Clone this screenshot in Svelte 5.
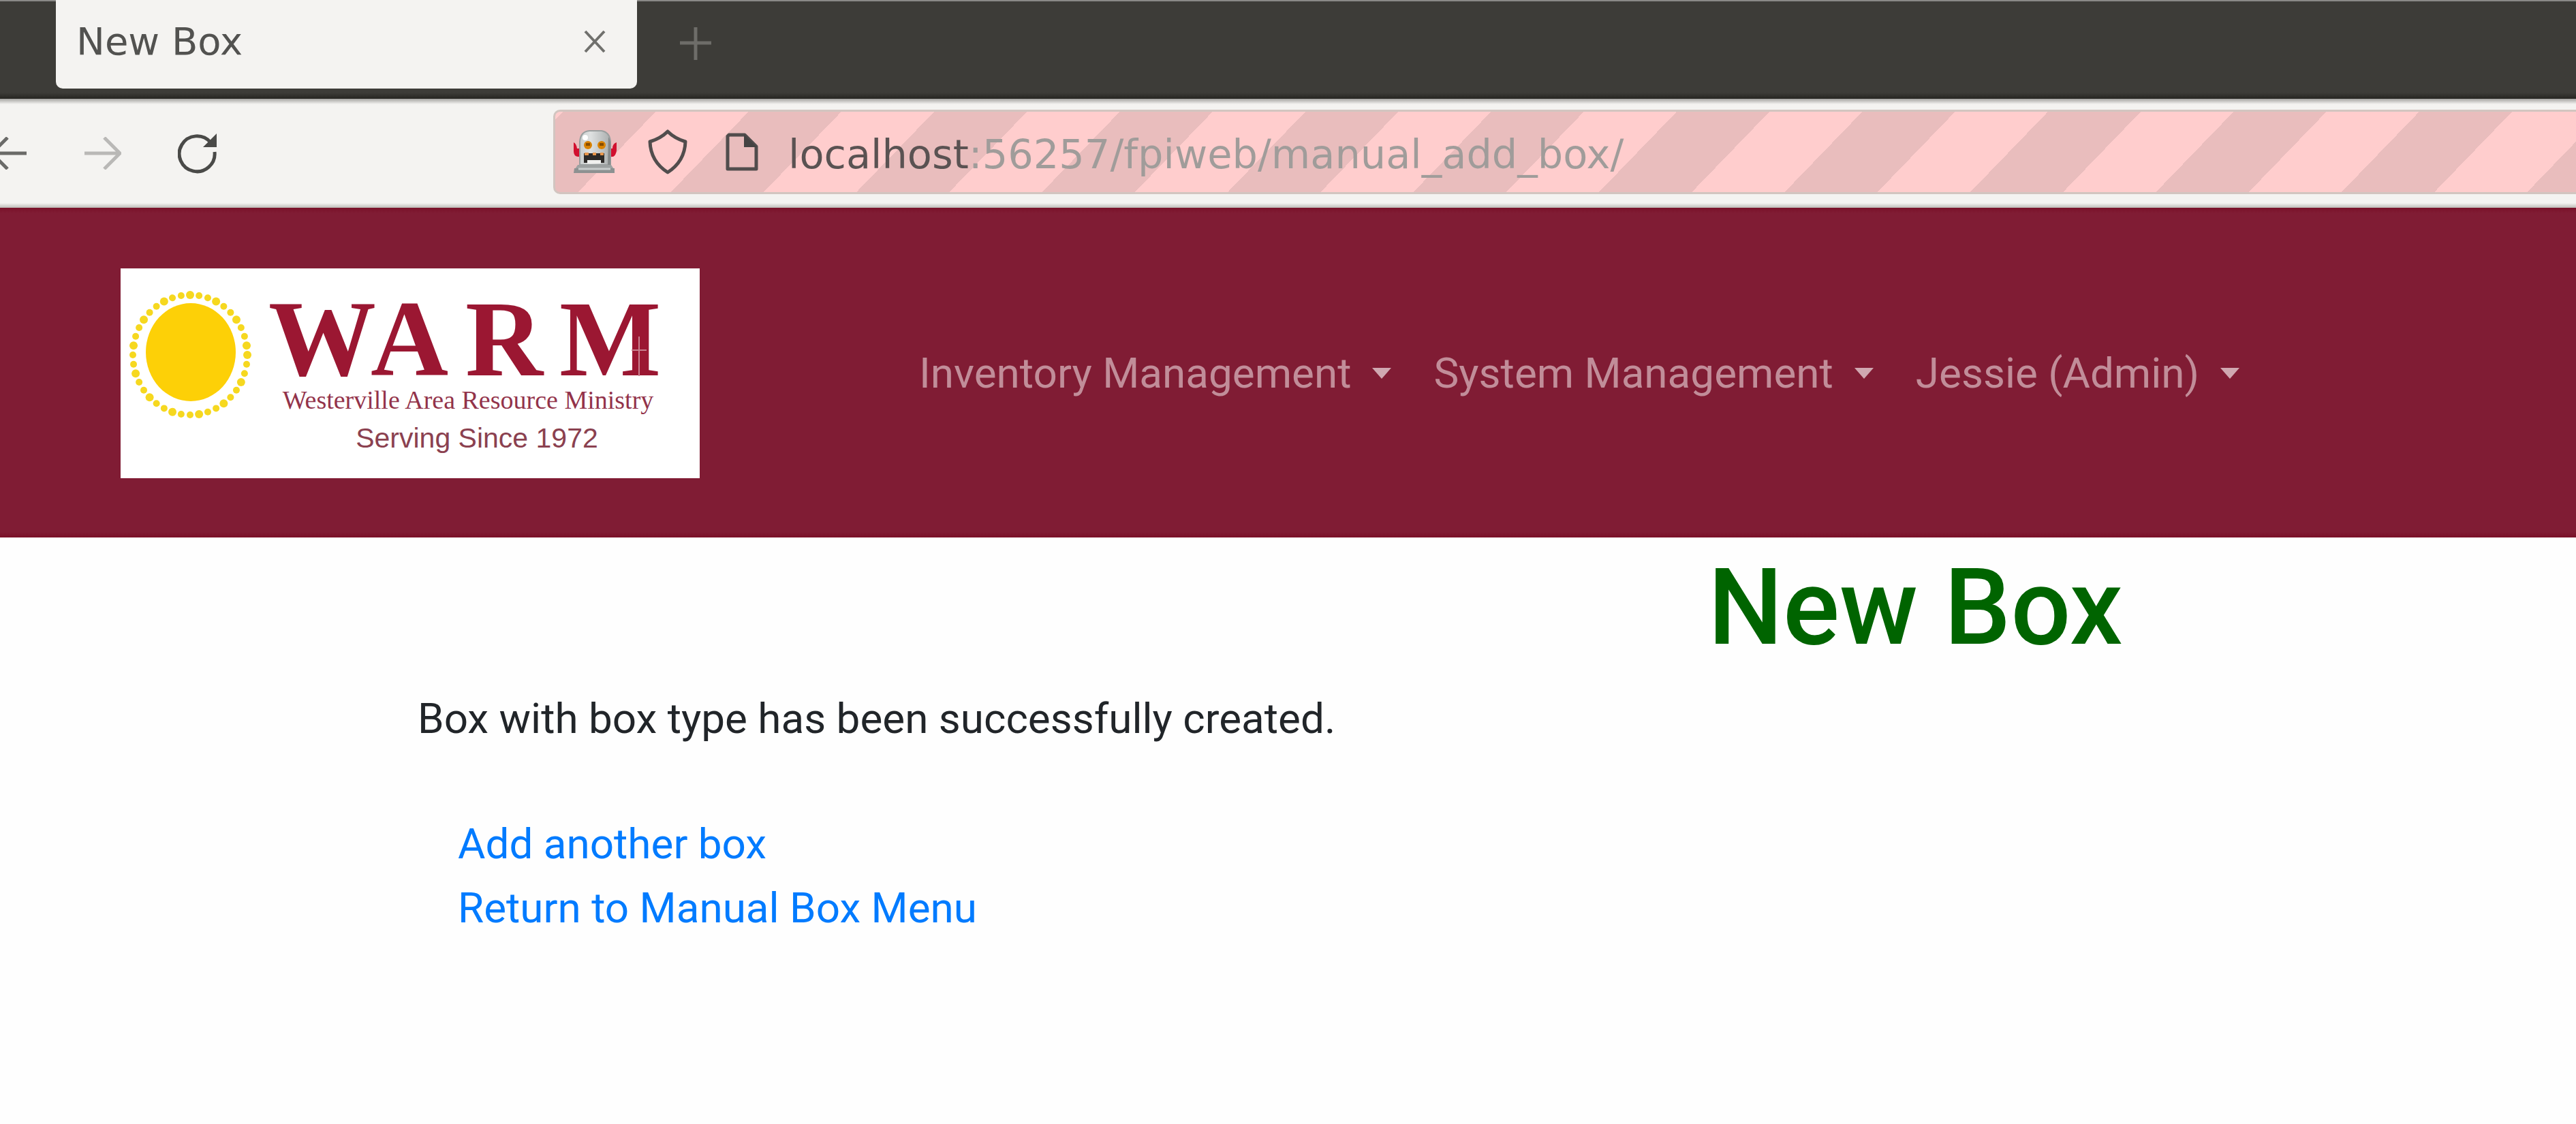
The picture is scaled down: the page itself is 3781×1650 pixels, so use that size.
<script>
  const menus = ['Inventory Management', 'System Management', 'Jessie (Admin)'];
  const links = ['Add another box', 'Return to Manual Box Menu'];

  // Dots of the ring around the logo's sun
  const rays = Array.from({ length: 40 }, (_, i) => {
    const angle = (i / 40) * Math.PI * 2;
    return {
      x: 102 + Math.cos(angle) * 84,
      y: 127 + Math.sin(angle) * 88,
      r: i % 3 === 0 ? 6 : 5
    };
  });

  let address = $state('localhost:56257/fpiweb/manual_add_box/');
</script>

<div class="browser">
  <div class="tabs">
    <div class="tab">
      <span class="tab-title">New Box</span>
      <button class="icon-button" aria-label="Close tab">
        <svg width="32" height="34" viewBox="0 0 32 34"><path d="M2 2 30 32M30 2 2 32" fill="none" stroke="#70706d" stroke-width="4" /></svg>
      </button>
    </div>
    <button class="icon-button new-tab" aria-label="Open a new tab">
      <svg width="46" height="48" viewBox="0 0 46 48"><path d="M23 0V48M0 23H46" fill="none" stroke="#6e6d69" stroke-width="5" /></svg>
    </button>
  </div>

  <div class="toolbar">
    <button class="icon-button" aria-label="Back">
      <svg width="40" height="48" viewBox="14 0 40 48"><path d="M53 24H3M25 1 2 24 25 47" fill="none" stroke="#6a6a68" stroke-width="5" /></svg>
    </button>
    <button class="icon-button forward" aria-label="Forward">
      <svg width="54" height="48" viewBox="0 0 54 48"><path d="M0 24H51M29 1 52 24 29 47" fill="none" stroke="#b9b8b6" stroke-width="5" /></svg>
    </button>
    <button class="icon-button reload" aria-label="Reload">
      <svg width="58" height="60" viewBox="0 0 58 60">
        <path d="M48 14A26 26 0 1 0 54 28" fill="none" stroke="#4a4a48" stroke-width="5" />
        <path d="M57 1V21H37Z" fill="#4a4a48" />
      </svg>
    </button>
    <div class="address">
      <svg class="robot" width="66" height="64" viewBox="0 0 66 64" aria-hidden="true">
        <defs>
          <linearGradient id="metal" x1="0" y1="0" x2="1" y2="0">
            <stop offset="0" stop-color="#c9cdcd" />
            <stop offset=".35" stop-color="#dfe1e1" />
            <stop offset="1" stop-color="#a9adad" />
          </linearGradient>
        </defs>
        <path d="M1 18Q5 20 6 27H11V39H7Q1 38 1 31Z" fill="#d1102f" />
        <path d="M64 18Q58 20 58 27H54V39H59Q63 37 64 30Z" fill="#d1102f" />
        <path d="M10 51V17Q11 2 24 1H42Q54 3 55 17V51Z" fill="url(#metal)" stroke="#9a9f9f" stroke-width="2" />
        <path d="M52 10Q55 15 55 22V51H51Z" fill="#858989" />
        <circle cx="18" cy="11" r="4" fill="#fff" />
        <ellipse cx="22" cy="22" rx="6" ry="6" fill="#d98200" />
        <ellipse cx="42" cy="22" rx="6" ry="6" fill="#d98200" />
        <path d="M19 21H25M39 21H45" stroke="#864c00" stroke-width="4" />
        <path d="M16 34H46V48H41V44H21V48H16Z" fill="#2d2a28" />
        <path d="M17 35H23M29 35H34M40 35H45" stroke="#e8964b" stroke-width="4" />
        <path d="M21 44H41V49H21Z" fill="#f0f0ee" />
        <path d="M7 51H56L60 57H3Z" fill="#9da1a1" />
        <path d="M2 56H61V63H1Z" fill="#8d9191" />
        <path d="M8 57H55" stroke="#c8cccc" stroke-width="3" />
      </svg>
      <svg class="shield" width="58" height="66" viewBox="0 0 58 66" aria-hidden="true"><path d="M29 3Q19 13 3 18Q4 47 29 63Q54 47 55 18Q39 13 29 3Z" fill="none" stroke="#514d4d" stroke-width="5" stroke-linejoin="round" /></svg>
      <svg class="page" width="48" height="56" viewBox="0 0 48 56" aria-hidden="true">
        <path d="M5 3H28L45 20V53H3V5Z" fill="none" stroke="#514d4d" stroke-width="5" stroke-linejoin="round" />
        <path d="M27 2 46 21H27Z" fill="#454343" />
      </svg>
      <input class="url" type="text" aria-label="Address" spellcheck="false" bind:value={address} />
    </div>
  </div>
</div>

<header class="site-header">
  <a class="brand" href="#home" aria-label="Westerville Area Resource Ministry">
    <svg width="850" height="308" viewBox="0 0 850 308">
      <rect width="850" height="308" fill="#fff" />
      {#each rays as ray}
        <circle cx={ray.x} cy={ray.y} r={ray.r} fill="#f6d81f" />
      {/each}
      <ellipse cx="103" cy="123" rx="66" ry="72" fill="#fdd007" />
      <text class="logo-name" x="217 367 506 644" y="157">WARM</text>
      <path d="M761 100V158M750 120H772" stroke="#c8808f" stroke-width="2" />
      <text class="logo-full" x="510" y="206" text-anchor="middle">Westerville Area Resource Ministry</text>
      <text class="logo-since" x="523" y="263" text-anchor="middle">Serving Since 1972</text>
    </svg>
  </a>
  <nav>
    {#each menus as menu}
      <button class="menu" aria-haspopup="true">{menu}<span class="caret"></span></button>
    {/each}
  </nav>
</header>

<main>
  <h1>New Box</h1>
  <p>Box with box type has been successfully created.</p>
  <ul>
    {#each links as link}
      <li><a href="#{link}">{link}</a></li>
    {/each}
  </ul>
</main>

<style>
  :global(body) {
    background: #fefefe;
    overflow-x: hidden;
  }

  svg {
    display: block;
    flex: none;
  }

  .icon-button {
    padding: 0;
    border: 0;
    background: none;
  }

  .browser {
    font-family: 'DejaVu Sans', sans-serif;
  }

  .tabs {
    display: flex;
    align-items: flex-start;
    height: 145px;
    padding-left: 82px;
    box-sizing: border-box;
    border-top: 2px solid #8a8987;
    background: linear-gradient(#3d3c38 0 134px, #262521);
  }

  .tab {
    display: flex;
    align-items: center;
    justify-content: space-between;
    width: 853px;
    height: 130px;
    margin-top: -2px;
    padding: 0 46px 8px 30px;
    box-sizing: border-box;
    border-radius: 0 0 10px 10px;
    background: #f4f3f1;
  }

  .tab-title {
    font-size: 56px;
    line-height: 64px;
    color: #525250;
  }

  .new-tab {
    margin: 38px 0 0 63px;
  }

  .toolbar {
    display: flex;
    align-items: center;
    height: 160px;
    background: linear-gradient(#a5a4a1, #f4f3f1 8px, #f4f3f1 153px, #bdbbb6);
  }

  .forward {
    margin-left: 84px;
  }

  .reload {
    margin-left: 83px;
  }

  .address {
    display: flex;
    flex: 1;
    align-items: center;
    height: 124px;
    margin: 0 -20px 4px 493px;
    padding-left: 26px;
    box-sizing: border-box;
    border: 3px solid #d2c5c0;
    border-radius: 10px;
    background: repeating-linear-gradient(134deg, #e9bdbd 8px 106px, #ffcdcd 106px 204px);
  }

  .shield {
    margin-left: 44px;
  }

  .page {
    margin-left: 56px;
  }

  .url {
    flex: 1;
    min-width: 0;
    height: 100%;
    margin-left: 44px;
    padding: 6px 0 0;
    box-sizing: border-box;
    border: 0;
    outline: 0;
    font: 59px/72px 'DejaVu Sans', sans-serif;
    color: transparent;
    caret-color: #4c4848;
    /* The host name is darker than the rest of the address */
    background: linear-gradient(90deg, #5a5252 268px, #a09c9a 268px);
    background-clip: text;
    -webkit-background-clip: text;
  }

  .site-header {
    display: flex;
    align-items: center;
    padding: 89px 177px 87px;
    background: linear-gradient(#7a1028, #801c34 8px calc(100% - 8px), #7a1028);
  }

  .logo-name {
    font: bold 158px 'Liberation Serif', serif;
    fill: #9b1732;
  }

  .logo-full {
    font: 38px 'Liberation Serif', serif;
    fill: #93334a;
  }

  .logo-since {
    font: 41px 'Liberation Sans', sans-serif;
    fill: #8b4150;
  }

  nav {
    display: flex;
    gap: 62px;
    margin-left: 322px;
  }

  .menu {
    display: flex;
    align-items: center;
    gap: 31px;
    padding: 0;
    border: 0;
    background: none;
    font: 62px/94px Roboto, sans-serif;
    color: #c18d99;
    white-space: nowrap;
  }

  .caret {
    border: 14px solid transparent;
    border-top: 16px solid #d0a8b1;
    border-bottom: 0;
  }

  main {
    padding: 10px 0 0 613px;
    font: 62px/94px Roboto, sans-serif;
    color: #212529;
  }

  h1 {
    margin: 0 0 23px 1894px;
    font-size: 155px;
    font-weight: 500;
    line-height: 186px;
    color: #006400;
    white-space: nowrap;
  }

  p {
    margin: 0 0 90px;
  }

  ul {
    margin: 0;
    padding-left: 59px;
    list-style: none;
  }

  a {
    color: #007bff;
    text-decoration: none;
  }
</style>
